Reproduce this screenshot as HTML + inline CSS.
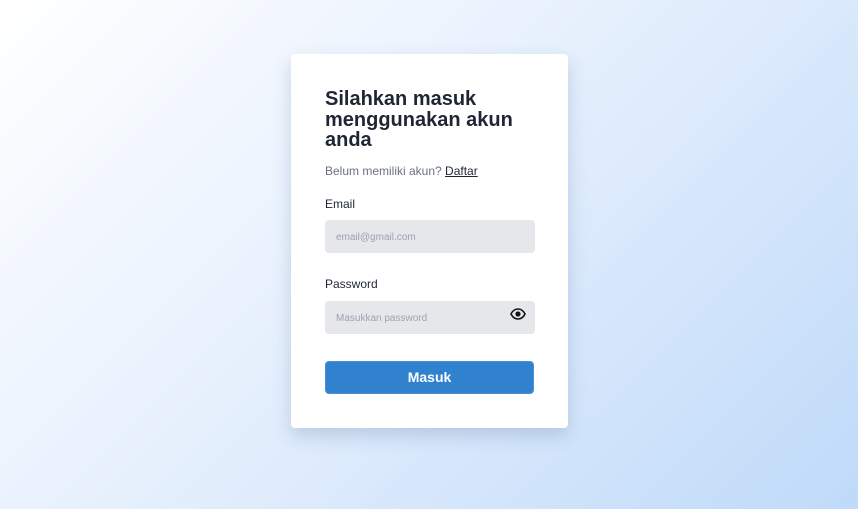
<!DOCTYPE html><html><head><style>
body{margin:0;width:858px;height:509px;overflow:hidden;background:linear-gradient(135deg,#ffffff 0%,#e6f0fd 45%,#bfdaf9 100%);font-family:"Liberation Sans",sans-serif;position:relative}
.card{position:absolute;left:291px;top:54px;width:277px;height:374px;background:#fff;border-radius:4px;box-shadow:0 8px 18px rgba(100,130,170,.3)}
.a{position:absolute;left:34px}
h1{margin:0;font-size:20px;line-height:20.5px;font-weight:bold;color:#1e2633;top:35px;width:220px}
.sub{top:110px;font-size:12px;color:#6b7280}
.sub u{color:#1e2633}
.lbl{font-size:12px;color:#1e2633}
.inp{width:210px;height:33px;background:#e5e7eb;border-radius:4px;font-size:10px;color:#9ca3af;line-height:35px;box-sizing:border-box;padding-left:11px}
.btn{top:307px;width:209px;height:33px;background:#3182ce;border-radius:4px;color:#fff;font-weight:bold;font-size:14px;text-align:center;line-height:31px;border:1px solid #4a90d9;box-sizing:border-box}
</style></head><body><div class="card">
<h1 class="a">Silahkan masuk menggunakan akun anda</h1>
<div class="a sub">Belum memiliki akun? <u>Daftar</u></div>
<div class="a lbl" style="top:143px">Email</div>
<div class="a inp" style="top:166px">email@gmail.com</div>
<div class="a lbl" style="top:223px">Password</div>
<div class="a inp" style="top:247px">Masukkan password
<svg style="position:absolute;right:9px;top:7px" width="16" height="12" viewBox="0 0 16 12"><path d="M1 6C3 2 5.5 1 8 1s5 1 7 5c-2 4-4.5 5-7 5S3 10 1 6z" fill="none" stroke="#111" stroke-width="1.6"/><circle cx="8" cy="6" r="2.6" fill="#111"/></svg></div>
<div class="a btn">Masuk</div>
</div></body></html>
